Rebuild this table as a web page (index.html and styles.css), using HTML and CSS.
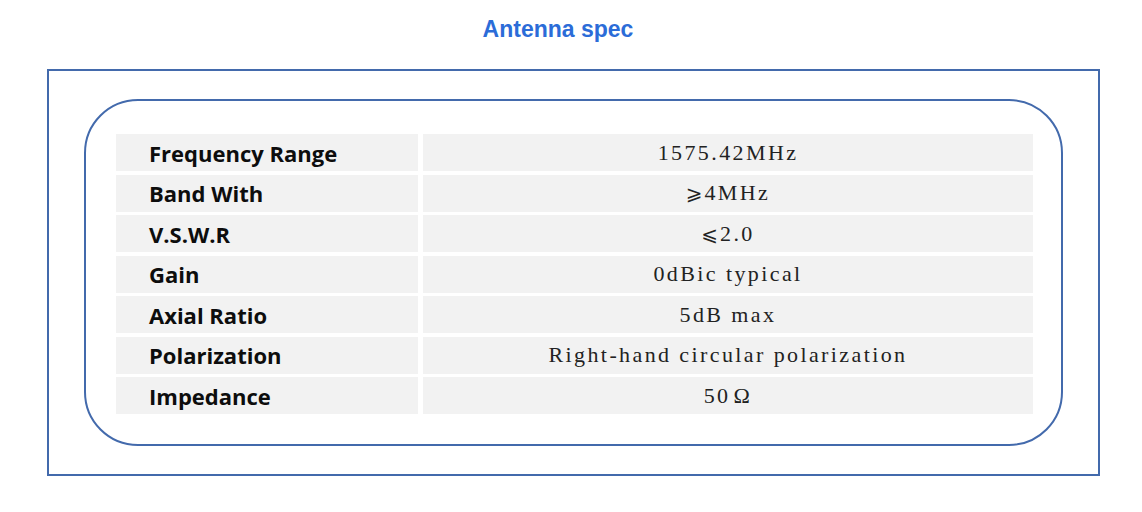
FILE: index.html
```html
<!DOCTYPE html>
<html>
<head>
<meta charset="utf-8">
<link rel="stylesheet" href="styles.css">
</head>
<body>
<header class="head"><h1 class="title">Antenna spec</h1></header>
<section class="frame">
  <div class="card">
    <div class="spec">
      <div class="k">Frequency Range</div><div class="v">1575.42MHz</div>
      <div class="k">Band With</div><div class="v"><span class="sym">⩾</span>4MHz</div>
      <div class="k">V.S.W.R</div><div class="v"><span class="sym">⩽</span>2.0</div>
      <div class="k">Gain</div><div class="v">0dBic typical</div>
      <div class="k">Axial Ratio</div><div class="v">5dB max</div>
      <div class="k">Polarization</div><div class="v">Right-hand circular polarization</div>
      <div class="k">Impedance</div><div class="v">50<span class="om">Ω</span></div>
    </div>
  </div>
</section>
</body>
</html>
```
FILE: styles.css
```css
html, body {
  margin: 0;
  padding: 0;
  background: #ffffff;
}
.head {
  width: 1116px;
  height: 69px;
  padding-top: 16px;
  box-sizing: border-box;
  text-align: center;
}
.title {
  margin: 0;
  font-family: "Liberation Sans", Arial, sans-serif;
  font-weight: bold;
  font-size: 23px;
  line-height: 26px;
  color: #2b6cd8;
}
.frame {
  margin-left: 47px;
  width: 1053px;
  height: 407px;
  box-sizing: border-box;
  border: 2px solid #436aac;
  padding: 28px 35px;
}
.card {
  height: 347px;
  box-sizing: border-box;
  border: 2px solid #436aac;
  border-radius: 54px;
  padding: 33px 28px 30px 30px;
}
.spec {
  display: grid;
  grid-template-columns: 302px 1fr;
  grid-auto-rows: 37px;
  column-gap: 5px;
  row-gap: 3.5px;
}
.k, .v {
  background: #f2f2f2;
  display: flex;
  align-items: center;
}
.k {
  padding-left: 33px;
  font-family: "Open Sans", Lato, sans-serif;
  font-weight: bold;
  font-size: 22px;
  color: #0d0d0d;
}
.v {
  justify-content: center;
  font-family: "Liberation Serif", "Times New Roman", serif;
  font-size: 22px;
  letter-spacing: 2.4px;
  color: #222222;
}
.sym {
  font-family: "DejaVu Serif", "DejaVu Sans", serif;
  font-size: 20px;
  letter-spacing: 0;
  margin-right: 2px;
}
.om {
  margin-left: 3px;
}
```
